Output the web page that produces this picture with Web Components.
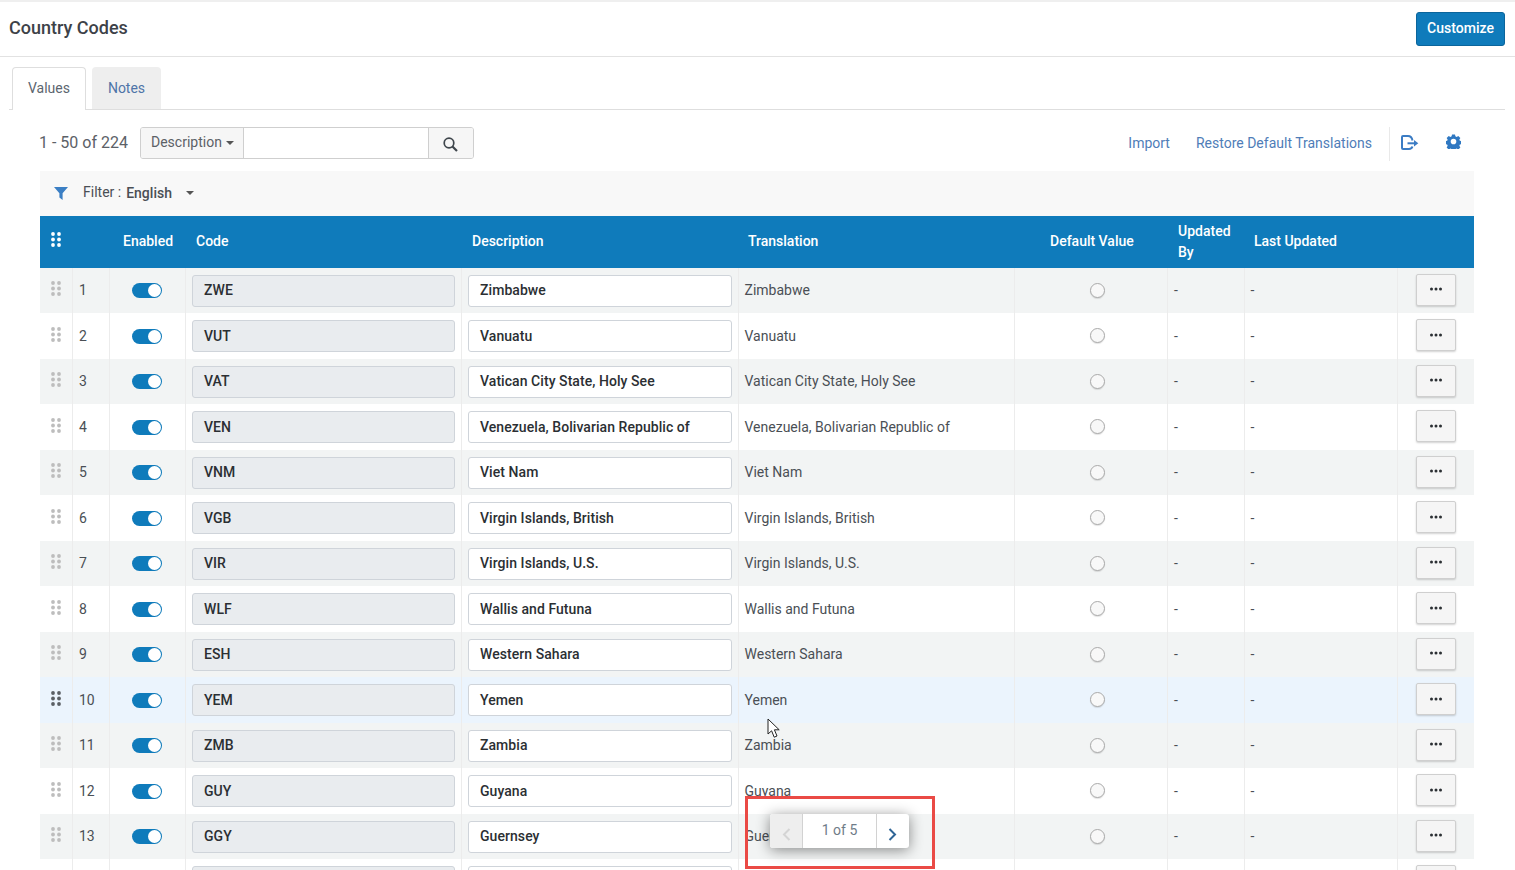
<!DOCTYPE html>
<html>
<head>
<meta charset="utf-8">
<title>Country Codes</title>
<style>
  html, body { margin: 0; height: 870px; overflow: hidden; background: #fff; }
  body {
    position: relative;
    font-family: Roboto, "Liberation Sans", sans-serif;
    font-size: 14px;
    color: #3c3c3c;
    --cols: 33px 37px 76px 276px 277px 276px 153px 77px 153px 76px;
  }
</style>
</head>
<body>
<cc-header title="Country Codes"></cc-header>
<cc-tabs></cc-tabs>
<cc-toolbar></cc-toolbar>
<cc-filter></cc-filter>
<cc-table>
  <cc-row n="1" code="ZWE" desc="Zimbabwe"></cc-row>
  <cc-row n="2" code="VUT" desc="Vanuatu"></cc-row>
  <cc-row n="3" code="VAT" desc="Vatican City State, Holy See"></cc-row>
  <cc-row n="4" code="VEN" desc="Venezuela, Bolivarian Republic of"></cc-row>
  <cc-row n="5" code="VNM" desc="Viet Nam"></cc-row>
  <cc-row n="6" code="VGB" desc="Virgin Islands, British"></cc-row>
  <cc-row n="7" code="VIR" desc="Virgin Islands, U.S."></cc-row>
  <cc-row n="8" code="WLF" desc="Wallis and Futuna"></cc-row>
  <cc-row n="9" code="ESH" desc="Western Sahara"></cc-row>
  <cc-row n="10" code="YEM" desc="Yemen" hover></cc-row>
  <cc-row n="11" code="ZMB" desc="Zambia"></cc-row>
  <cc-row n="12" code="GUY" desc="Guyana"></cc-row>
  <cc-row n="13" code="GGY" desc="Guernsey"></cc-row>
  <cc-row blank></cc-row>
</cc-table>
<cc-pager></cc-pager>
<cc-cursor></cc-cursor>

<script>
const DOTS = `<svg width="10" height="15" viewBox="0 0 10 15" fill="currentColor">
  <circle cx="2" cy="2" r="1.9"/><circle cx="8" cy="2" r="1.9"/>
  <circle cx="2" cy="7.5" r="1.9"/><circle cx="8" cy="7.5" r="1.9"/>
  <circle cx="2" cy="13" r="1.9"/><circle cx="8" cy="13" r="1.9"/></svg>`;

class CcHeader extends HTMLElement {
  constructor() {
    super();
    this.attachShadow({ mode: "open" });
    this.shadowRoot.innerHTML = `
      <style>
        :host {
          display: flex;
          justify-content: space-between;
          align-items: center;
          box-sizing: border-box;
          height: 57px;
          border-top: 2px solid #efefef;
          border-bottom: 1px solid #e2e2e2;
          padding: 0 10px 0 9px;
        }
        h1 { margin: 0 0 4px; font-size: 18px; font-weight: 500; color: #3d4248; }
        button {
          width: 89px; height: 34px; margin-bottom: 1px; padding: 0 0 1px;
          background: #0f7bbb; border: 1px solid #0b659c; border-radius: 3px;
          color: #fff; font: 500 14px Roboto, sans-serif;
        }
      </style>
      <h1>${this.getAttribute("title")}</h1>
      <button>Customize</button>`;
  }
}

class CcTabs extends HTMLElement {
  constructor() {
    super();
    this.attachShadow({ mode: "open" });
    this.shadowRoot.innerHTML = `
      <style>
        :host {
          display: flex;
          gap: 6px;
          box-sizing: border-box;
          height: 43px;
          margin: 10px 10px 0 9px;
          padding-left: 3px;
          border-bottom: 1px solid #dedede;
        }
        div {
          box-sizing: border-box;
          height: 43px;
          padding-top: 13px;
          text-align: center;
          border-radius: 4px 4px 0 0;
        }
        .on { width: 74px; padding-top: 12px; background: #fff; border: 1px solid #dedede; border-bottom: 0; color: #5c6670; }
        .off { width: 69px; height: 42px; background: #eeeeee; color: #4f74a8; }
      </style>
      <div class="on">Values</div>
      <div class="off">Notes</div>`;
  }
}

class CcToolbar extends HTMLElement {
  constructor() {
    super();
    this.attachShadow({ mode: "open" });
    this.shadowRoot.innerHTML = `
      <style>
        :host {
          display: flex;
          align-items: flex-start;
          box-sizing: border-box;
          height: 44px;
          margin-top: 17px;
          padding: 0 40px 0 39px;
          color: #5c6167;
        }
        .count { width: 101px; height: 32px; line-height: 31px; font-size: 16px; }
        .search {
          display: flex;
          box-sizing: border-box;
          width: 334px; height: 32px;
          border: 1px solid #cfcfcf;
          border-radius: 3px;
          overflow: hidden;
        }
        .sel {
          box-sizing: border-box;
          display: flex; align-items: center; gap: 4px;
          width: 103px; padding: 0 0 2px 10px;
          background: #f6f6f6; border-right: 1px solid #cfcfcf;
        }
        .caret { width: 0; height: 0; margin-top: 2px; border: 4px solid transparent; border-top-color: #555; border-bottom: 0; }
        .inp { flex: 1; }
        .go {
          width: 45px; display: flex; align-items: center; justify-content: center;
          background: #f6f6f6; border-left: 1px solid #cfcfcf; padding: 2px 2px 0 0; box-sizing: border-box;
        }
        .right { margin-left: auto; display: flex; align-items: flex-start; height: 34px; color: #4f7db8; }
        .right span { line-height: 32px; }
        .import { margin-right: 26px; }
        .sep { width: 1px; height: 34px; background: #e9e9e9; margin: 0 11px 0 17px; }
        .ico { display: block; margin-top: 8px; }
      </style>
      <div class="count">1 - 50 of 224</div>
      <div class="search">
        <div class="sel">Description<i class="caret"></i></div>
        <div class="inp"></div>
        <div class="go">
          <svg width="15" height="15" viewBox="0 0 15 15" fill="none" stroke="#3f464c" stroke-width="1.7">
            <circle cx="6" cy="6" r="4.8"/><path d="M9.5 9.5L14 14" stroke-width="2.2"/>
          </svg>
        </div>
      </div>
      <div class="right">
        <span class="import">Import</span>
        <span>Restore Default Translations</span>
        <i class="sep"></i>
        <svg class="ico" style="margin-right:27px" width="18" height="15" viewBox="0 0 18 15" fill="none" stroke="#3b7cc4" stroke-width="2">
          <path d="M11.5 5.5C11 2.8 9.6 1 7 1H2a1 1 0 0 0-1 1v11a1 1 0 0 0 1 1h6c2 0 3-.8 3.4-2.4"/>
          <path d="M6.5 8.3H14" />
          <path d="M13 5L17.3 8.3 13 11.6Z" fill="#3b7cc4" stroke="none"/>
        </svg>
        <svg class="ico" style="margin-right:14px;margin-top:7px" width="15" height="15" viewBox="-8 -8 16 16" fill="#2f78c2">
          <path fill-rule="evenodd" d="M-1.6-7.5h3.2l.4 2 1.3.6 1.8-1.1 2.2 2.2-1.1 1.8.6 1.3 2 .4v3.2l-2 .4-.6 1.3 1.1 1.8-2.2 2.2-1.8-1.1-1.3.6-.4 2h-3.2l-.4-2-1.3-.6-1.8 1.1-2.2-2.2 1.1-1.8-.6-1.3-2-.4v-3.2l2-.4.6-1.3-1.1-1.8 2.2-2.2 1.8 1.1 1.3-.6zM0-3a3 3 0 1 0 0 6 3 3 0 0 0 0-6z"/>
        </svg>
      </div>`;
  }
}

class CcFilter extends HTMLElement {
  constructor() {
    super();
    this.attachShadow({ mode: "open" });
    this.shadowRoot.innerHTML = `
      <style>
        :host {
          display: flex;
          align-items: center;
          box-sizing: border-box;
          height: 45px;
          margin: 0 41px 0 40px;
          padding: 0 0 4px 14px;
          background: #f8f8f8;
          color: #4a4f55;
        }
        svg { margin-right: 15px; margin-top: 4px; }
        b { font-weight: 500; margin-left: 5px; margin-top: 2px; }
        i { width: 0; height: 0; margin-left: 14px; margin-top: 3px; border: 4px solid transparent; border-top-color: #555; border-bottom: 0; }
      </style>
      <svg width="14" height="13" viewBox="0 0 14 13" fill="#3b7fc4"><path d="M0 0H14L8.6 6.2V13L5.4 10.6V6.2Z"/></svg>
      <span>Filter :</span><b>English</b><i></i>`;
  }
}

class CcTable extends HTMLElement {
  constructor() {
    super();
    this.attachShadow({ mode: "open" });
    this.shadowRoot.innerHTML = `
      <style>
        :host { display: block; margin: 0 41px 0 40px; }
        .head {
          display: grid;
          grid-template-columns: var(--cols);
          align-items: center;
          height: 51.8px;
          background: #0f7bbb;
          color: #fff;
          font-weight: 500;
        }
        .head div { padding-left: 10px; line-height: 21px; }
        .head .dots { padding: 0 0 5px 11px; line-height: 0; }
        .head .en { padding: 0 0 1px 13px; white-space: nowrap; }
        .head .one { padding-bottom: 1px; }
        .head .tr { padding-left: 9px; }
        .head .dv { padding-left: 35px; white-space: nowrap; }
        .head .lu { padding-left: 9px; white-space: nowrap; }
      </style>
      <div class="head">
        <div class="dots">${DOTS}</div>
        <div></div>
        <div class="en">Enabled</div>
        <div class="one">Code</div>
        <div class="one">Description</div>
        <div class="one tr">Translation</div>
        <div class="one dv">Default Value</div>
        <div>Updated By</div>
        <div class="one lu">Last Updated</div>
        <div></div>
      </div>
      <slot></slot>`;
  }
}

class CcRow extends HTMLElement {
  constructor() {
    super();
    this.attachShadow({ mode: "open" });
    const blank = this.hasAttribute("blank");
    const n = this.getAttribute("n") || "";
    const code = this.getAttribute("code") || "";
    const desc = this.getAttribute("desc") || "";
    const odd = Number(n) % 2 === 1;
    const bg = this.hasAttribute("hover") ? "#ebf4fd" : odd ? "#f2f4f4" : "#fff";
    const dotColor = this.hasAttribute("hover") ? "#5a5f64" : "#bdbdbd";
    const dash = blank ? "" : "-";
    this.shadowRoot.innerHTML = `
      <style>
        :host {
          display: grid;
          grid-template-columns: var(--cols);
          height: 45.5px;
          background: ${bg};
          color: #4a4f55;
        }
        .c { display: flex; align-items: center; box-sizing: border-box; border-right: 1px solid #ececec; padding-left: 6px; }
        .c.last { border-right: 0; }
        .t { padding-bottom: 1px; }
        .drag { color: ${dotColor}; padding: 0 0 3.6px 11px; line-height: 0; }
        .tg { padding-left: 22px; }
        .box {
          box-sizing: border-box;
          width: 264px; height: 32px;
          display: flex; align-items: center;
          padding: 0 0 1px 11px;
          border: 1px solid #cfd4da;
          border-radius: 3px;
          background: #fff;
          color: #2b2f33;
          font-weight: 500;
          letter-spacing: .06px;
        }
        .code { background: #e9ecef; width: 263px; }
        .radio {
          box-sizing: border-box;
          width: 15px; height: 15px; margin: 0 0 .2px 69px;
          border: 1px solid #aaa; border-radius: 50%;
          background: #f8f8f8;
          box-shadow: 0 1px 1px rgba(0,0,0,.12);
        }
        .toggle {
          position: relative;
          width: 30px; height: 15px;
          border-radius: 8px;
          background: #0f7bbb;
        }
        .toggle::after {
          content: "";
          position: absolute; top: 1px; right: 1px;
          width: 13px; height: 13px;
          border-radius: 50%;
          background: #fff;
        }
        .btn {
          box-sizing: border-box;
          display: flex; align-items: center; justify-content: center;
          width: 40px; height: 32px; margin: 0 0 2px 18px;
          background: #f5f5f5;
          border: 1px solid #cfcfcf;
          border-radius: 2px;
          box-shadow: 0 1px 2px rgba(0,0,0,.18);
        }
        .btn svg { margin-bottom: 1px; }
      </style>
      <div class="c drag">${DOTS}</div>
      <div class="c t">${n}</div>
      <div class="c tg"><div class="toggle"></div></div>
      <div class="c"><div class="box code">${code}</div></div>
      <div class="c"><div class="box">${desc}</div></div>
      <div class="c t" style="padding-left:5.5px">${desc}</div>
      <div class="c"><div class="radio"></div></div>
      <div class="c t">${dash}</div>
      <div class="c t" style="padding-left:5.5px">${dash}</div>
      <div class="c last" style="padding:0">
        <div class="btn">
          <svg width="14" height="4" viewBox="0 0 14 4" fill="#2b2f33"><circle cx="2.5" cy="2" r="1.5"/><circle cx="7" cy="2" r="1.5"/><circle cx="11.5" cy="2" r="1.5"/></svg>
        </div>
      </div>`;
  }
}

// floats over the table, with the red annotation box round it
class CcPager extends HTMLElement {
  constructor() {
    super();
    this.attachShadow({ mode: "open" });
    this.shadowRoot.innerHTML = `
      <style>
        :host {
          position: absolute;
          left: 745px; top: 796px;
          box-sizing: border-box;
          width: 190px; height: 73px;
          border: 3px solid #ea4a45;
        }
        .bar {
          position: absolute;
          left: 22px; top: 15px;
          display: flex;
          width: 139px; height: 34px;
          border-radius: 3px;
          background: #fff;
          box-shadow: 0 2px 14px rgba(0,0,0,.45);
          overflow: hidden;
        }
        .prev, .next { display: flex; align-items: center; justify-content: center; padding-top: 6px; box-sizing: border-box; }
        .prev { width: 33px; background: #eeeeee; border-right: 1px solid #d2d2d2; }
        .mid { width: 73px; text-align: center; line-height: 32px; color: #6f7c88; }
        .next { width: 33px; border-left: 1px solid #d2d2d2; padding-right: 2px; }
      </style>
      <div class="bar">
        <div class="prev"><svg width="9" height="13" viewBox="0 0 9 13" fill="none" stroke="#d4d4d4" stroke-width="2"><path d="M7.5 1L2 6.5 7.5 12"/></svg></div>
        <div class="mid">1 of 5</div>
        <div class="next"><svg width="9" height="13" viewBox="0 0 9 13" fill="none" stroke="#2f6596" stroke-width="2"><path d="M1.5 1L7 6.5 1.5 12"/></svg></div>
      </div>`;
  }
}

class CcCursor extends HTMLElement {
  constructor() {
    super();
    this.attachShadow({ mode: "open" });
    this.shadowRoot.innerHTML = `
      <style>
        :host { position: absolute; left: 767px; top: 718px; width: 14px; height: 21px; line-height: 0; }
      </style>
      <svg width="14" height="21" viewBox="0 0 14 21">
        <path d="M1 1V16L4.6 12.8 7.2 19.2 10 18 7.4 11.8H12.2Z" fill="#fff" stroke="#222" stroke-width="1"/>
      </svg>`;
  }
}

customElements.define("cc-header", CcHeader);
customElements.define("cc-tabs", CcTabs);
customElements.define("cc-toolbar", CcToolbar);
customElements.define("cc-filter", CcFilter);
customElements.define("cc-table", CcTable);
customElements.define("cc-row", CcRow);
customElements.define("cc-pager", CcPager);
customElements.define("cc-cursor", CcCursor);
</script>
</body>
</html>
